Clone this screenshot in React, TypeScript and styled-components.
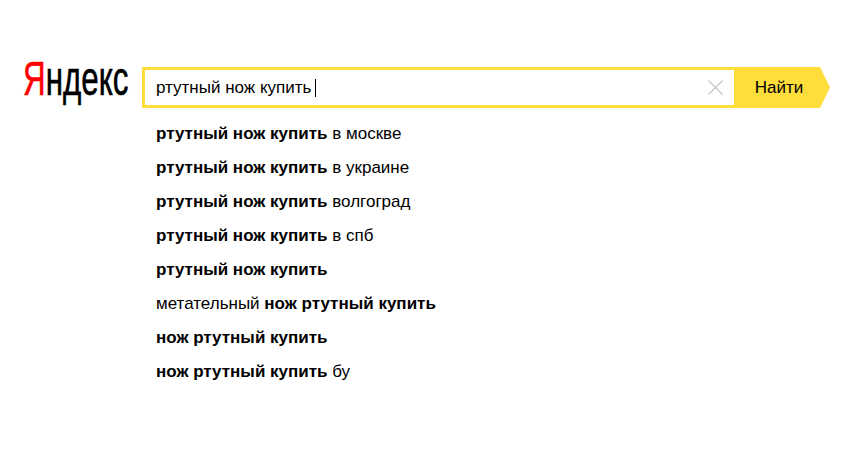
import styled, { createGlobalStyle } from 'styled-components';

const GlobalStyle = createGlobalStyle`
	html, body {
		margin: 0;
		padding: 0;
		background: #ffffff;
	}
	body {
		font-family: 'Liberation Sans', Arial, sans-serif;
		color: #000000;
	}
`;

const suggestions: { before?: string; bold: string; after?: string }[] = [
	{ bold: 'ртутный нож купить', after: ' в москве' },
	{ bold: 'ртутный нож купить', after: ' в украине' },
	{ bold: 'ртутный нож купить', after: ' волгоград' },
	{ bold: 'ртутный нож купить', after: ' в спб' },
	{ bold: 'ртутный нож купить' },
	{ before: 'метательный ', bold: 'нож ртутный купить' },
	{ bold: 'нож ртутный купить' },
	{ bold: 'нож ртутный купить', after: ' бу' },
];

export default function App() {
	return (
		<Page>
			<GlobalStyle />
			<Logo>
				<LogoText>
					<LogoRed>Я</LogoRed>ндекс
				</LogoText>
			</Logo>
			<Search>
				<SearchForm>
					<InputBox>
						<InputText>ртутный нож купить</InputText>
						<Caret />
						<ClearIcon viewBox="0 0 15 15">
							<path d="M0.5 0.5L14.5 14.5M14.5 0.5L0.5 14.5" stroke="#c4c4c4" strokeWidth="1.2" fill="none" />
						</ClearIcon>
					</InputBox>
					<SearchButton>Найти</SearchButton>
				</SearchForm>
				<SuggestList>
					{suggestions.map((s, i) => (
						<SuggestItem key={i}>
							{s.before}
							<b>{s.bold}</b>
							{s.after}
						</SuggestItem>
					))}
				</SuggestList>
			</Search>
		</Page>
	);
}

const Page = styled.div`
	width: 858px;
	height: 455px;
	box-sizing: border-box;
	padding: 67px 0 0 23px;
	display: flex;
	flex-direction: row;
	align-items: flex-start;
	overflow: hidden;
`;

const Logo = styled.div`
	width: 119px;
	height: 41px;
	flex-shrink: 0;
	overflow: visible;
`;

const LogoText = styled.div`
	display: inline-block;
	margin-top: -9px;
	font-size: 49px;
	line-height: 41px;
	color: #000000;
	white-space: nowrap;
	-webkit-text-stroke: 0.6px currentColor;
	transform: scaleX(0.64);
	transform-origin: left center;
`;

const LogoRed = styled.span`
	color: #ff0000;
`;

const Search = styled.div`
	width: 688px;
	display: flex;
	flex-direction: column;
`;

const SearchForm = styled.div`
	display: flex;
	flex-direction: row;
	height: 41px;
`;

const InputBox = styled.div`
	width: 592px;
	box-sizing: border-box;
	border: 3px solid #ffdd3a;
	border-right: none;
	padding-left: 11px;
	display: flex;
	flex-direction: row;
	align-items: center;
	background: #ffffff;
`;

const InputText = styled.span`
	font-size: 17px;
	white-space: pre;
`;

const Caret = styled.span`
	width: 1px;
	height: 18px;
	margin-left: 4px;
	background: #000000;
`;

const ClearIcon = styled.svg`
	width: 15px;
	height: 15px;
	margin-left: auto;
	margin-right: 11px;
`;

const SearchButton = styled.div`
	width: 96px;
	box-sizing: border-box;
	padding-right: 6px;
	display: flex;
	align-items: center;
	justify-content: center;
	font-size: 17px;
	background: #ffdd3a;
	clip-path: polygon(0 0, 86px 0, 96px 50%, 86px 100%, 0 100%);
`;

const SuggestList = styled.div`
	display: flex;
	flex-direction: column;
	padding: 9px 0 0 14px;
`;

const SuggestItem = styled.div`
	height: 34px;
	line-height: 34px;
	font-size: 17px;
	white-space: pre;
	color: #000000;
`;
